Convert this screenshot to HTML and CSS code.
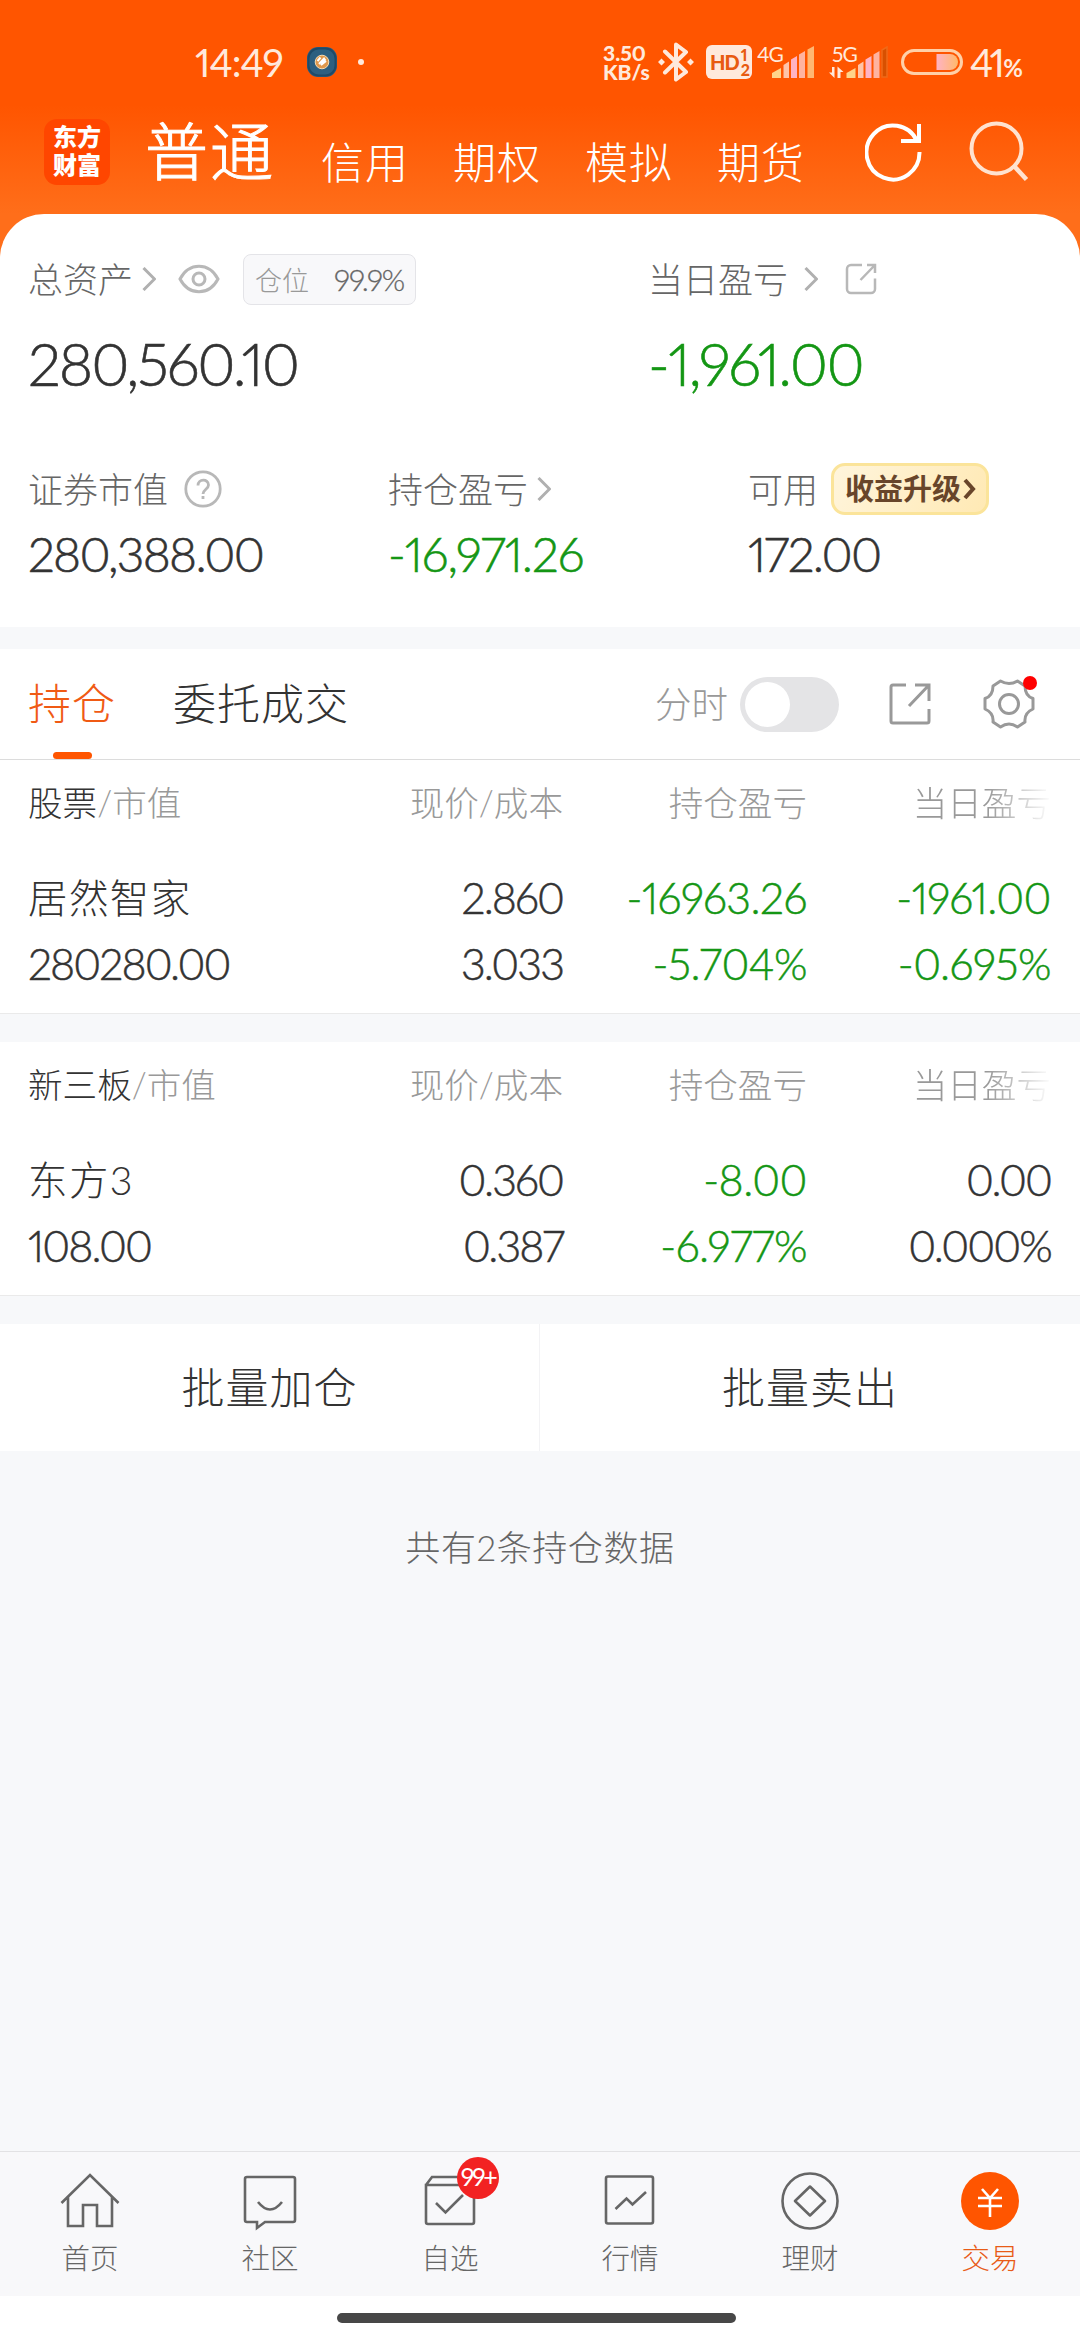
FILE: index.html
```html
<!DOCTYPE html>
<html lang="zh-CN">
<head>
    <meta charset="UTF-8">
    <meta name="viewport" content="width=device-width, initial-scale=1.0">
    <title>交易</title>
    <link rel="stylesheet" href="styles.css">
</head>
<body>
    <header class="top">
        <div class="status">
            <span class="clock">14:49</span>
            <svg class="app-dot" width="30" height="30" viewBox="0 0 30 30">
                <rect width="30" height="30" rx="11" fill="#2c5f80"/>
                <rect x="1.5" y="1.5" width="27" height="27" rx="10" fill="none" stroke="#1e4a68" stroke-width="2"/>
                <circle cx="15" cy="15" r="6.8" fill="#e0984c" stroke="#f8dcb0" stroke-width="1"/>
                <path d="M10.500 14l3-3.500M12 17l5-5.500 1 1.500-4 5 5-4" fill="none" stroke="#fff" stroke-width="2"/>
            </svg>
            <span class="more-dot"></span>
            <div class="speed"><span>3.50</span><span>KB/s</span></div>
            <svg class="bluetooth" width="36" height="40" viewBox="0 0 36 40">
                <path d="M7 9.500l21 20.500L18 37.500V2.500L28 10 7 30.500" fill="none" stroke="#ffe9dc" stroke-width="4" stroke-linejoin="round" stroke-linecap="round"/>
                <path d="M0 20l3.500-3.500L7 20l-3.500 3.500zM29 20l3.500-3.500L36 20l-3.500 3.500z" fill="#ffe9dc"/>
            </svg>
            <div class="hd"><span>HD</span><span class="hd-num"><i>1</i><i>2</i></span></div>
            <div class="net net-4g">
                <span>4G</span>
                <svg width="43" height="32" viewBox="0 0 43 32">
                    <path d="M0 32v-5l9-5v10z" fill="#ffd48a"/>
                    <path d="M11.500 32V19l5.500-3.500V32z" fill="#ffc4a8"/>
                    <path d="M19 32V13.500l6-3.500v22z" fill="#ffb3c4"/>
                    <path d="M27 32V8.500L33 5v27z" fill="#ffb3a0"/>
                    <path d="M35.500 32V3.500L42 0v32z" fill="#ffb772"/>
                </svg>
            </div>
            <div class="net net-5g">
                <span>5G</span>
                <svg width="60" height="32" viewBox="0 0 60 32">
                    <path d="M5.500 21v11L0 26.500h3V21zM8.500 32V20.500l6 5.500h-3v6z" fill="#ffe9dc"/>
                    <path d="M17.500 32v-5l9-5v10z" fill="#ffd48a"/>
                    <path d="M29 32V19l5.500-3.500V32z" fill="#ffc4a8"/>
                    <path d="M36.500 32V13.500l6-3.500v22z" fill="#ffb3c4"/>
                    <path d="M44.500 32V8.500l6-3.500v27z" fill="#ffb3a0"/>
                    <path d="M53 31V4l5-3v30z" fill="#d85000" stroke="#f06a18" stroke-width="1.500"/>
                </svg>
            </div>
            <svg class="battery" width="62" height="26" viewBox="0 0 62 26">
                <defs>
                    <linearGradient id="charge"><stop offset="0" stop-color="#ffb3c4"/><stop offset="1" stop-color="#ffb96a"/></linearGradient>
                </defs>
                <rect x="1.500" y="1.500" width="59" height="23" rx="11.500" fill="none" stroke="#ffd0a8" stroke-width="3"/>
                <path d="M35.500 5H49a8 8 0 0 1 0 16H35.500z" fill="url(#charge)"/>
            </svg>
            <span class="percent">41<small>%</small></span>
        </div>
        <nav class="markets">
            <div class="logo"><span>东方</span><span>财富</span></div>
            <a class="current">普通</a>
            <a>信用</a>
            <a>期权</a>
            <a>模拟</a>
            <a>期货</a>
            <svg class="refresh" width="58" height="60" viewBox="0 0 58 60">
                <path d="M54.500 30A26.500 27 0 1 1 52 19" fill="none" stroke="#fff" stroke-width="4"/>
                <path d="M54 2v17H36" fill="none" stroke="#fff" stroke-width="4"/>
            </svg>
            <svg class="search" width="60" height="60" viewBox="0 0 60 60">
                <circle cx="27.500" cy="27.500" r="25" fill="none" stroke="#ffe2cf" stroke-width="4"/>
                <path d="M45 45l12.500 13.500" stroke="#ffe2cf" stroke-width="4.500"/>
            </svg>
        </nav>
    </header>

    <section class="assets">
        <div class="assets-main">
            <div class="asset">
                <div class="label">总资产
                    <svg class="arrow near" width="14" height="24" viewBox="0 0 14 24"><path d="M1.500 1l11 11-11 11"/></svg>
                    <svg class="eye" width="42" height="30" viewBox="0 0 42 30">
                        <path d="M2 15C11-2 31-2 40 15 31 32 11 32 2 15z"/>
                        <circle cx="21" cy="15" r="6"/>
                    </svg>
                    <span class="ratio">仓位<b>99.9%</b></span>
                </div>
                <div class="num">280,560.10</div>
            </div>
            <div class="asset">
                <div class="label">当日盈亏
                    <svg class="arrow far" width="14" height="24" viewBox="0 0 14 24"><path d="M1.500 1l11 11-11 11"/></svg>
                    <svg class="share" width="32" height="32" viewBox="0 0 32 32"><path d="M17 2H6a4 4 0 0 0-4 4v20a4 4 0 0 0 4 4h20a4 4 0 0 0 4-4V15.500M22 2h8v8M29.500 2.500L15.500 17"/></svg>
                </div>
                <div class="num down">-1,961.00</div>
            </div>
        </div>
        <div class="assets-sub">
            <div class="asset">
                <div class="label">证券市值
                    <svg class="help" width="38" height="38" viewBox="0 0 38 38"><circle cx="19" cy="19" r="17.200"/><path d="M14 15.500c0-7 10.500-7 10.500-.5 0 4-5.500 4.500-5.500 9M19 26v3"/></svg>
                </div>
                <div class="num">280,388.00</div>
            </div>
            <div class="asset">
                <div class="label">持仓盈亏
                    <svg class="arrow near" width="14" height="24" viewBox="0 0 14 24"><path d="M1.500 1l11 11-11 11"/></svg>
                </div>
                <div class="num down">-16,971.26</div>
            </div>
            <div class="asset">
                <div class="label">可用
                    <span class="upgrade"><span>收益升级</span><svg width="13" height="22" viewBox="0 0 13 22"><path d="M2 2l8 9-8 9"/></svg></span>
                </div>
                <div class="num">172.00</div>
            </div>
        </div>
    </section>

    <section class="tabs">
        <a class="tab active">持仓</a>
        <a class="tab">委托成交</a>
        <span class="minute">分时</span>
        <span class="switch"></span>
        <svg class="export" width="42" height="42" viewBox="0 0 42 42"><path d="M17 2H4a2 2 0 0 0-2 2v34a2 2 0 0 0 2 2h34a2 2 0 0 0 2-2V26M26 2h14v16M40 2L20 23"/></svg>
        <div class="settings">
            <svg width="52" height="50" viewBox="0 0 52 50">
                <path d="M17.500 2Q26 7 34.500 2L42 7Q42 17 50 19.500V30Q41 34 42 43L34.500 48Q26 42 17.500 48L10 43Q11 34 2 30V19.500Q10 17 10 7Z" stroke-linejoin="round"/>
                <circle cx="26" cy="25" r="9.500"/>
            </svg>
            <span class="red-dot"></span>
        </div>
    </section>

    <section class="holdings">
        <div class="row head"><span><b>股票</b>/市值</span><span>现价/成本</span><span>持仓盈亏</span><span class="fade">当日盈亏</span></div>
        <div class="row first"><span class="name">居然智家</span><span>2.860</span><span class="down">-16963.26</span><span class="down">-1961.00</span></div>
        <div class="row"><span>280280.00</span><span>3.033</span><span class="down">-5.704%</span><span class="down">-0.695%</span></div>
    </section>

    <section class="holdings">
        <div class="row head"><span><b>新三板</b>/市值</span><span>现价/成本</span><span>持仓盈亏</span><span class="fade">当日盈亏</span></div>
        <div class="row first"><span class="name">东方3</span><span>0.360</span><span class="down">-8.00</span><span>0.00</span></div>
        <div class="row"><span>108.00</span><span>0.387</span><span class="down">-6.977%</span><span>0.000%</span></div>
    </section>

    <section class="batch">
        <a>批量加仓</a>
        <a>批量卖出</a>
    </section>

    <p class="count">共有2条持仓数据</p>

    <footer class="bottom">
        <a>
            <svg width="60" height="60" viewBox="0 0 60 60"><path d="M1.500 32L30 4l28.500 28M8 26v29h15V34h14v21h15V26"/></svg>
            首页
        </a>
        <a>
            <svg width="60" height="60" viewBox="0 0 60 60"><path d="M7 6h46a2 2 0 0 1 2 2v41a2 2 0 0 1-2 2H25l-8 6v-6H7a2 2 0 0 1-2-2V8a2 2 0 0 1 2-2zM18 31q12 15 24 0"/></svg>
            社区
        </a>
        <a>
            <svg width="60" height="60" viewBox="0 0 60 60"><path d="M6 14h46a2 2 0 0 1 2 2v35a2 2 0 0 1-2 2H8a2 2 0 0 1-2-2zM6 14l6-8h36l6 8M16 32l9.500 9.500L43 24"/></svg>
            <span class="badge">99+</span>
            自选
        </a>
        <a>
            <svg width="60" height="60" viewBox="0 0 60 60"><rect x="6" y="5.500" width="47" height="47" rx="2"/><path d="M15.500 38L26.500 27.500l6 6L46 21"/></svg>
            行情
        </a>
        <a>
            <svg width="60" height="60" viewBox="0 0 60 60"><circle cx="30" cy="30" r="27.500"/><path d="M30 15.500L45 30 30 44.500 15 30z" stroke-linejoin="round"/></svg>
            理财
        </a>
        <a class="on">
            <svg width="60" height="60" viewBox="0 0 60 60"><circle cx="30" cy="30" r="29" fill="#ff5500" stroke="none"/><path d="M22 18l8 9 8-9M18 27h24M18 35h24M30 27v19" stroke="#fff"/></svg>
            交易
        </a>
    </footer>
    <div class="handle"></div>
</body>
</html>
```
FILE: styles.css
```css
* {
    box-sizing: border-box;
}
body {
    margin: 0;
    width: 1080px;
    height: 2340px;
    display: flex;
    flex-direction: column;
    background: #f7f8fa;
    color: #333;
    font-family: Lato, "Noto Sans CJK SC", sans-serif;
    font-weight: 300;
    font-variant-numeric: proportional-nums;
    overflow: hidden;
}
svg {
    display: block;
    flex: none;
    fill: none;
}
b, i, small {
    font-weight: inherit;
    font-style: normal;
}

/* header */
.top {
    height: 258px;
    flex: none;
    background: linear-gradient(#ff5500 105px, #ff6e1a 214px);
    color: #fff;
}
.status {
    height: 106px;
    padding: 18px 0 0 195px;
    display: flex;
    align-items: center;
    color: #ffe9dc;
    white-space: nowrap;
}
.clock {
    width: 112px;
    font-size: 39px;
    font-weight: 400;
    letter-spacing: -1px;
}
.more-dot {
    width: 6px;
    height: 6px;
    margin-left: 21px;
    border-radius: 50%;
    background: #ffe9dc;
}
.speed {
    width: 55px;
    margin-left: 239px;
    display: flex;
    flex-direction: column;
    font-size: 21px;
    line-height: 19px;
    font-weight: 900;
}
.hd {
    width: 46px;
    height: 34px;
    margin-left: 12px;
    padding-left: 4px;
    display: flex;
    align-items: center;
    border-radius: 6px;
    background: #ffe9dc;
    color: #e85a10;
    font-size: 20px;
    font-weight: 900;
    letter-spacing: -1px;
}
.hd-num {
    display: flex;
    flex-direction: column;
    margin-left: 2px;
    font-size: 16px;
    line-height: 15px;
}
.net {
    position: relative;
    height: 32px;
}
.net span {
    position: absolute;
    top: -3px;
    font-size: 21px;
    line-height: 22px;
    font-weight: 400;
    letter-spacing: -1px;
}
.net-4g {
    margin-left: 20px;
}
.net-4g span {
    left: -15px;
}
.net-5g {
    margin-left: 14px;
}
.net-5g span {
    left: 3px;
}
.battery {
    margin-left: 12px;
}
.percent {
    margin-left: 7px;
    font-size: 39px;
    font-weight: 400;
    letter-spacing: -3.5px;
}
.percent small {
    margin-left: 2px;
    font-size: 24px;
    font-weight: 700;
}
.markets {
    height: 108px;
    padding-left: 44px;
    display: flex;
    align-items: flex-start;
    white-space: nowrap;
}
.logo {
    width: 66px;
    height: 66px;
    margin-top: 13px;
    padding-top: 4px;
    border-radius: 13px;
    background: #ff4600;
    display: flex;
    flex-direction: column;
    align-items: center;
    font-size: 24px;
    line-height: 28px;
    font-weight: 900;
}
.markets a {
    width: 132px;
    margin-top: 27px;
    font-size: 43px;
    line-height: 60px;
    letter-spacing: 1px;
}
.markets .current {
    width: 176px;
    margin: 15px 0 0 35px;
    font-size: 63px;
    line-height: 60px;
    letter-spacing: 2px;
    -webkit-text-stroke: 1px #fff;
}
.refresh {
    margin: 16px 0 0 16px;
}
.search {
    margin: 15px 0 0 46px;
}

/* assets */
.assets {
    height: 413px;
    margin-top: -44px;
    flex: none;
    padding: 38px 30px 0 28px;
    border-radius: 44px 44px 0 0;
    background: #fff;
}
.assets-main {
    display: grid;
    grid-template-columns: 620px 1fr;
}
.assets-sub {
    display: grid;
    grid-template-columns: 360px 360px 1fr;
    margin-top: 60px;
}
.label {
    height: 54px;
    padding-bottom: 3px;
    display: flex;
    align-items: center;
    color: #666;
    font-size: 35px;
    white-space: nowrap;
}
.label > * {
    margin-top: 3px;
}
.arrow {
    stroke: #b0b0b0;
    stroke-width: 3;
}
.arrow.near {
    margin-left: 9px;
}
.arrow.far {
    margin-left: 16px;
}
.eye {
    margin-left: 22px;
    stroke: #b8b8b8;
    stroke-width: 3;
}
.ratio {
    width: 173px;
    height: 51px;
    margin-left: 23px;
    padding: 0 11px;
    display: flex;
    align-items: center;
    justify-content: space-between;
    border: 1px solid #e4e4e8;
    border-radius: 8px;
    background: #f8f8fa;
    color: #999;
    font-size: 27px;
}
.ratio b {
    color: #666;
    font-size: 30px;
    letter-spacing: -1.2px;
    -webkit-text-stroke: .3px;
}
.share {
    margin-left: 27px;
    stroke: #b8b8b8;
    stroke-width: 2.5;
}
.help {
    margin-left: 16px;
    stroke: #b8b8b8;
    stroke-width: 2.8;
}
.upgrade {
    width: 158px;
    height: 52px;
    margin-left: 13px;
    padding-left: 11px;
    display: flex;
    align-items: center;
    border: 3px solid #fbe49a;
    border-radius: 14px;
    background: linear-gradient(120deg, #fff5dc, #ffe9b4);
    color: #68452a;
    font-size: 29px;
    line-height: 40px;
    font-weight: 700;
}
.upgrade svg {
    margin-left: 2px;
    stroke: #68452a;
    stroke-width: 4;
}
.num {
    white-space: nowrap;
    -webkit-text-stroke: .6px;
}
.assets-main .num {
    margin-top: 20px;
    font-size: 59px;
    line-height: 76px;
    letter-spacing: -2.1px;
}
.assets-main .down {
    letter-spacing: -1.6px;
}
.assets-sub .num {
    margin-top: 8px;
    font-size: 48px;
    line-height: 60px;
    letter-spacing: -1.7px;
}
.assets-sub .down {
    letter-spacing: -1px;
}
.down {
    color: #149614;
}

/* tabs */
.tabs {
    height: 111px;
    margin-top: 22px;
    flex: none;
    padding-left: 28px;
    display: flex;
    align-items: center;
    border-bottom: 1px solid #dcdcdc;
    background: #fff;
    white-space: nowrap;
}
.tab {
    position: relative;
    font-size: 43px;
    letter-spacing: 1px;
    margin: 0 57px 6px 0;
}
.active {
    color: #f05a14;
}
.active::after {
    content: "";
    position: absolute;
    left: 25px;
    bottom: -27px;
    width: 39px;
    height: 7px;
    border-radius: 4px;
    background: #ff5500;
}
.minute {
    margin-left: auto;
    margin-bottom: 3px;
    color: #999;
    font-size: 36.5px;
}
.switch {
    width: 99px;
    height: 55px;
    margin-left: 12px;
    padding: 5px;
    border-radius: 28px;
    background: #e4e4e6;
}
.switch::before {
    content: "";
    display: block;
    width: 45px;
    height: 45px;
    border-radius: 50%;
    background: #fff;
}
.export {
    margin-left: 50px;
    stroke: #999;
    stroke-width: 3;
}
.settings {
    position: relative;
    margin: 0 45px 0 52px;
    stroke: #999;
    stroke-width: 3;
}
.red-dot {
    position: absolute;
    top: -3px;
    right: -2px;
    width: 14px;
    height: 14px;
    border-radius: 50%;
    background: #f00;
}

/* holdings */
.holdings {
    height: 254px;
    flex: none;
    padding: 8px 29px 0 28px;
    border-bottom: 1px solid #eaeaea;
    background: #fff;
}
.holdings + .holdings {
    margin-top: 28px;
}
.row {
    height: 66px;
    display: grid;
    grid-template-columns: 270px 265px 244px 244px;
    align-items: center;
    font-size: 43px;
    letter-spacing: -1.9px;
    text-align: right;
    white-space: nowrap;
    -webkit-text-stroke: .5px;
}
.row > :first-child {
    text-align: left;
}
.row.first {
    margin-top: 30px;
}
.row .down {
    letter-spacing: -.5px;
}
.row .name {
    margin-bottom: 3px;
    font-size: 39.5px;
    letter-spacing: 1.4px;
    -webkit-text-stroke: 0;
}
.head {
    color: #999;
    font-size: 34.6px;
    letter-spacing: 0;
    -webkit-text-stroke: 0;
}
.head b {
    color: #333;
}
.fade {
    -webkit-mask-image: linear-gradient(90deg, #000 180px, transparent 245px);
    mask-image: linear-gradient(90deg, #000 180px, transparent 245px);
}

/* batch */
.batch {
    height: 127px;
    margin-top: 28px;
    flex: none;
    display: grid;
    grid-template-columns: 1fr 1fr;
    background: #fff;
}
.batch a {
    padding-bottom: 6px;
    display: flex;
    align-items: center;
    justify-content: center;
    font-size: 43px;
    letter-spacing: 1px;
}
.batch a:first-child {
    border-right: 1px solid #f3f3f5;
}
.count {
    margin: 70px 0 0;
    color: #666;
    font-size: 35px;
    line-height: 52px;
    letter-spacing: .6px;
    text-align: center;
}

/* bottom nav */
.bottom {
    height: 145px;
    margin-top: auto;
    flex: none;
    padding-top: 19px;
    display: grid;
    grid-template-columns: repeat(6, 180px);
    border-top: 1px solid #e2e2e4;
    background: #f8f8fa;
}
.bottom a {
    position: relative;
    display: flex;
    flex-direction: column;
    align-items: center;
    color: #666;
    font-size: 28.5px;
    line-height: 54px;
}
.bottom svg {
    stroke: #666;
    stroke-width: 2.6;
}
.bottom .on {
    color: #e85c18;
}
.badge {
    position: absolute;
    top: -14px;
    left: 97px;
    width: 42px;
    height: 42px;
    border-radius: 50%;
    background: #f22222;
    color: #fff;
    font-size: 25px;
    line-height: 38px;
    font-weight: 400;
    letter-spacing: -2.5px;
    text-align: center;
}
.handle {
    height: 44px;
    flex: none;
    padding: 17px 344px 0 337px;
    background: #fff;
}
.handle::before {
    content: "";
    display: block;
    height: 10px;
    border-radius: 5px;
    background: #474747;
}
```
